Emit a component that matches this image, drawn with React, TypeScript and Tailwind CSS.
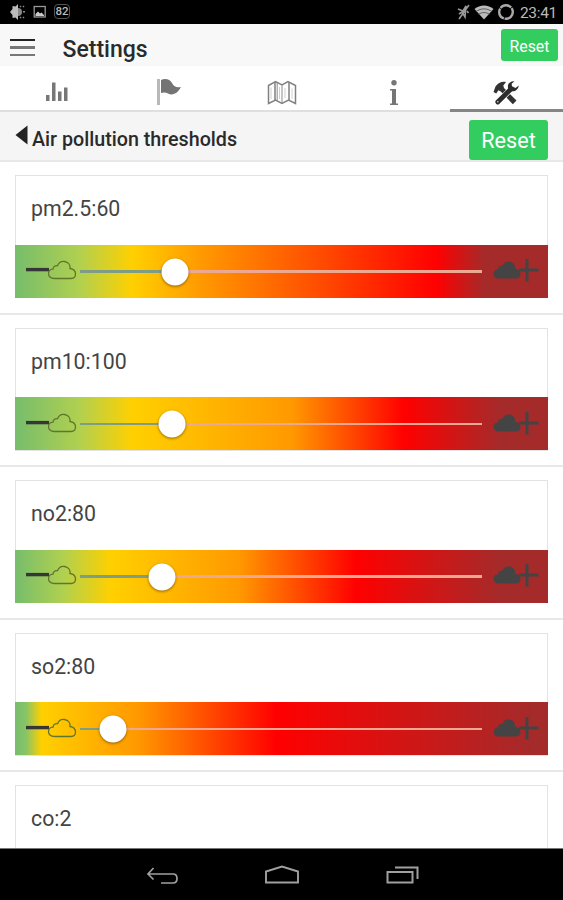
import { useState } from 'react';

const initialThresholds = [
  {
    name: 'pm2.5',
    value: 60,
    position: 23.6,
    gradient: 'bg-[linear-gradient(90deg,#76bd6c_0%,#b0d050_12%,#ffd000_22%,#ff9900_35%,#ff0000_79%,#a52a2a_88%)]',
  },
  {
    name: 'pm10',
    value: 100,
    position: 22.8,
    gradient: 'bg-[linear-gradient(90deg,#76bd6c_0%,#b0d050_12%,#ffd000_22%,#ff9900_52%,#ff0000_73%,#a52a2a_91%)]',
  },
  {
    name: 'no2',
    value: 80,
    position: 20.4,
    gradient: 'bg-[linear-gradient(90deg,#76bd6c_0%,#b0d050_9%,#ffd000_18%,#ff9900_42%,#ff0000_64%,#a52a2a_91%)]',
  },
  {
    name: 'so2',
    value: 80,
    position: 8.2,
    gradient: 'bg-[linear-gradient(90deg,#76bd6c_0%,#86c468_2%,#ffd000_5%,#ff9900_23%,#ff0000_49%,#a52a2a_97%)]',
  },
  {
    name: 'co',
    value: 2,
    position: 10,
    gradient: 'bg-[linear-gradient(90deg,#76bd6c_0%,#ffd000_10%,#ff9900_25%,#ff0000_50%,#a52a2a_95%)]',
  },
];

const StatsIcon = () => (
  <svg width="24" height="20" viewBox="0 0 24 20" fill="#777" className="ml-[2px]">
    <rect x="1" y="13" width="3.5" height="6" />
    <rect x="7" y="0.5" width="3.5" height="18.5" />
    <rect x="13" y="9.5" width="3.5" height="9.5" />
    <rect x="19" y="5.5" width="3.5" height="13.5" />
  </svg>
);

const FlagIcon = () => (
  <svg width="26" height="28" viewBox="0 0 26 28">
    <rect x="1" y="1" width="3" height="26" fill="#b9b9b9" />
    <path d="M5 2C9 0 14 1 16 5C18 9 21 10 25 9C22 15 17 18 12 15.5C9 14 7 14.5 5 15Z" fill="#747474" />
  </svg>
);

const MapIcon = () => (
  <svg width="30" height="26" viewBox="0 0 30 26" fill="none" stroke="#808080" strokeWidth="1.5" className="ml-[2px] mt-[2px]">
    <path d="M1.5 5.5L8.5 1.5L15 5L21 1.5L28.5 5.5V23.5L21.5 20L15 23.5L8.5 20L1.5 23.5Z" />
    <path d="M8 2V20M22 2V20" />
    <path d="M10.2 3V20.5M15 5.5V23" strokeWidth="0.9" />
    <path d="M4 7.5V19M12.5 7V19M18 8V18M25 8.5V19" stroke="#c4c4c4" strokeWidth="0.8" />
  </svg>
);

const InfoIcon = () => (
  <svg width="10" height="26" viewBox="0 0 10 26" fill="#757575" className="mt-[2px]">
    <circle cx="5" cy="2.8" r="2.7" />
    <path d="M1 9H7V23.5H9V25H1V23.5H3V10.5H1Z" />
  </svg>
);

const ToolsIcon = () => (
  <svg width="28" height="26" viewBox="0 0 28 26" className="-ml-[1px] mt-[1px]">
    <path d="M1.5 12L3.5 6.5C6 3 9.5 1.2 14 2L11.3 5.5L12 8L24.5 20.5L20.8 24.3L8.8 11.5L6.5 10.3L4.2 13.5Z" fill="#333" />
    <path d="M10.5 17.5L16.5 11.5" stroke="#fff" strokeWidth="6" />
    <path d="M5.8 22L19 9" stroke="#2c2c2c" strokeWidth="4.8" strokeLinecap="round" />
    <path d="M22.5 1.2C17.5 .8 14.5 5 16.5 9C19.5 13.2 26 11.5 26.8 5.5L23.5 8L20 6.3L19.6 3.8Z" fill="#2c2c2c" />
    <circle cx="5.8" cy="21.8" r=".8" fill="#ddd" />
  </svg>
);

const cloudPath = 'M7 18.5C2.8 18.5 1 16.2 1 13.7C1 11 3 9.4 5.5 9.2C5.8 6.8 7.6 5.2 10 5.7C11.2 2.6 14 1 17 1.5C20.8 2.1 23 5 22.5 8.5C26 9 28 11 28 14C28 16.7 26.2 18.5 23.5 18.5Z';

const CleanIcon = () => (
  <svg width="52" height="24" viewBox="0 0 52 24" className="shrink-0">
    <path d="M0 10.6H23" stroke="#363636" strokeWidth="3.4" />
    <path d={cloudPath} transform="translate(21.5 1)" fill="none" stroke="#62752c" strokeWidth="1.3" />
  </svg>
);

const PollutedIcon = () => (
  <svg width="48" height="24" viewBox="0 0 48 24" className="shrink-0">
    <path d={cloudPath} transform="translate(-0.5 1)" fill="#444" />
    <path d="M26 11H45.5M34 0V22.5" stroke="#444" strokeWidth="3" />
  </svg>
);

const tabs = [
  { id: 'stats', icon: <StatsIcon /> },
  { id: 'alerts', icon: <FlagIcon /> },
  { id: 'map', icon: <MapIcon /> },
  { id: 'info', icon: <InfoIcon /> },
  { id: 'settings', icon: <ToolsIcon /> },
];

function StatusBar() {
  return (
    <div className="h-[23.5px] shrink-0 bg-black flex items-center justify-between pl-[9px] pr-[6px]">
      <div className="flex items-center gap-[7px]">
        <svg width="17" height="18" viewBox="0 0 17 18">
          <path d="M9 1V17L6.5 14.5L3.5 15V12L1 9L3.5 6V3L6.5 3.5Z" fill="#bbb" />
          <path d="M9 5A4 4 0 0 1 9 13Z" fill="#888" />
          <path d="M11 3L12 4M14 8.8H16M11 15L12 14M14 4L15 3M14 14L15 15" stroke="#888" strokeWidth="1.5" />
        </svg>
        <svg width="14" height="14" viewBox="0 0 14 14">
          <rect x="1.2" y="1.5" width="11" height="10.5" fill="none" stroke="#999" strokeWidth="1.3" />
          <path d="M2.5 11V9L5 6.5L7 8.5L8.5 7.5L11 10V11Z" fill="#ccc" />
        </svg>
        <span className="w-[16px] h-[15px] border border-[#555] rounded-sm text-[#bbb] text-[11.5px] leading-[13px] font-medium text-center">82</span>
      </div>
      <div className="flex items-center">
        <svg width="15" height="18" viewBox="0 0 15 18" fill="none" stroke="#999" strokeWidth="1.6">
          <path d="M3 16L13 2M2 6L7 8L10 3L9 14L6 9L3 11" />
          <path d="M11 8L12.5 10" />
        </svg>
        <svg width="20" height="16" viewBox="0 0 20 16" className="ml-[3px]">
          <path d="M0.5 5C6 .3 14 .3 19.5 5L10 15.5Z" fill="#bbb" />
          <path d="M2 7.5C7 4 13 4 18 7.5M4.5 10.3C8 8 12 8 15.5 10.3" stroke="#555" strokeWidth="0.9" fill="none" />
        </svg>
        <svg width="18" height="18" viewBox="0 0 18 18" className="ml-[3px]">
          <circle cx="9" cy="9" r="6.8" fill="none" stroke="#aaa" strokeWidth="2.4" strokeDasharray="12 0.8" />
        </svg>
        <span className="ml-[5px] mt-[3px] text-[15.5px] leading-none text-[#b9b9b9] tracking-[-0.3px]">23:41</span>
      </div>
    </div>
  );
}

export default function App() {
  const [thresholds, setThresholds] = useState(initialThresholds);
  const [activeTab, setActiveTab] = useState('settings');

  const handleReset = () => {
    setThresholds(initialThresholds);
  };

  return (
    <div className="w-[563px] h-[900px] flex flex-col overflow-hidden bg-white font-['Roboto',sans-serif]">
      <StatusBar />

      {/* Title */}
      <header className="h-[42px] shrink-0 bg-[#f8f8f8] flex items-start pl-[10px] pr-[5px]">
        <button className="mt-[15px] w-[24.5px] flex flex-col gap-[5px]">
          <span className="h-[2.5px] w-full bg-[#222]"></span>
          <span className="h-[2.5px] w-full bg-[#777]"></span>
          <span className="h-[2.5px] w-full bg-[#777]"></span>
        </button>
        <h1 className="ml-[28px] mt-[12px] text-[23px] leading-[28px] font-medium text-[#2a2a2a]">Settings</h1>
        <button
          onClick={handleReset}
          className="ml-auto mt-[5px] w-[57px] h-[32px] rounded-[3px] bg-[#33cd5f] text-white text-[15.8px] leading-[36px]"
        >
          Reset
        </button>
      </header>

      {/* Tabs */}
      <nav className="h-[46.5px] shrink-0 flex border-b-[2px] border-[#dfdfdf]">
        {tabs.map((tab) => (
          <button
            key={tab.id}
            onClick={() => setActiveTab(tab.id)}
            className={`flex-1 pt-[10px] -mb-[2px] flex items-center justify-center border-b-[3px] ${activeTab === tab.id ? 'border-[#858585]' : 'border-transparent'}`}
          >
            {tab.icon}
          </button>
        ))}
      </nav>

      {/* Sub header */}
      <div className="h-[50px] shrink-0 bg-[#f5f5f5] border-b-[2px] border-[#e8e8e8] flex items-start pl-[15px] pr-[15px]">
        <svg width="13" height="20" viewBox="0 0 13 20" className="mt-[13px]">
          <path d="M0.5 10L12.5 .5V19.5Z" fill="#222" />
        </svg>
        <h2 className="ml-[4px] mt-[14px] text-[19.7px] leading-[27px] font-medium text-[#2a2a2a]">Air pollution thresholds</h2>
        <button
          onClick={handleReset}
          className="ml-auto mt-[8px] w-[79px] h-[40px] rounded-[3px] bg-[#33cd5f] text-white text-[21.6px] leading-[41px]"
        >
          Reset
        </button>
      </div>

      {/* Thresholds */}
      <main className="flex-1 min-h-0 overflow-hidden">
        {thresholds.map((item) => (
          <section key={item.name} className="h-[152.5px] px-[15px] pt-[13px] border-b-[2px] border-[#e8e8e8]">
            <div className="h-[123px] flex flex-col border border-[#e3e3e3]">
              <div className="h-[68.6px] shrink-0 pl-[15px] pt-[19.4px] text-[21.3px] leading-[28px] text-[#444]">
                {item.name}:{item.value}
              </div>
              <div className={`h-[53.3px] -mx-px shrink-0 flex items-center pl-[11px] pr-[7px] ${item.gradient}`}>
                <CleanIcon />
                <div className="relative ml-[2px] mt-[1px] w-[402px] h-[2.5px] bg-[#eda891]">
                  <div className="h-full bg-[#7f9c86]" style={{ width: `${item.position}%` }}></div>
                  <div
                    className="absolute top-1/2 -translate-1/2 size-[27px] rounded-full bg-white shadow-[0_1px_3px_rgba(0,0,0,0.45)]"
                    style={{ left: `${item.position}%` }}
                  ></div>
                </div>
                <div className="ml-[11px]"><PollutedIcon /></div>
              </div>
            </div>
          </section>
        ))}
      </main>

      {/* Navigation bar */}
      <footer className="h-[52.5px] shrink-0 bg-black border-t border-[#777] flex items-center pl-[146px]">
        <svg width="32" height="20" viewBox="0 0 32 20" fill="none" stroke="#a0a0a0" strokeWidth="1.7" className="mt-[3px]">
          <path d="M7.5 2L2 8L7.5 13.5M2 8H27Q31 8 31 12.5Q31 17 27 17H15" />
        </svg>
        <svg width="36" height="20" viewBox="0 0 36 20" fill="none" stroke="#a0a0a0" strokeWidth="1.9" className="ml-[86px] mt-[2px]">
          <path d="M2 17.5V6.5L18 1.5L34 6.5V17.5Z" />
        </svg>
        <svg width="34" height="20" viewBox="0 0 34 20" fill="none" stroke="#a0a0a0" strokeWidth="2" className="ml-[86px] mt-[2px]">
          <rect x="1.5" y="7" width="25" height="10.5" />
          <path d="M9 2.5H31.5V14" />
        </svg>
      </footer>
    </div>
  );
}
